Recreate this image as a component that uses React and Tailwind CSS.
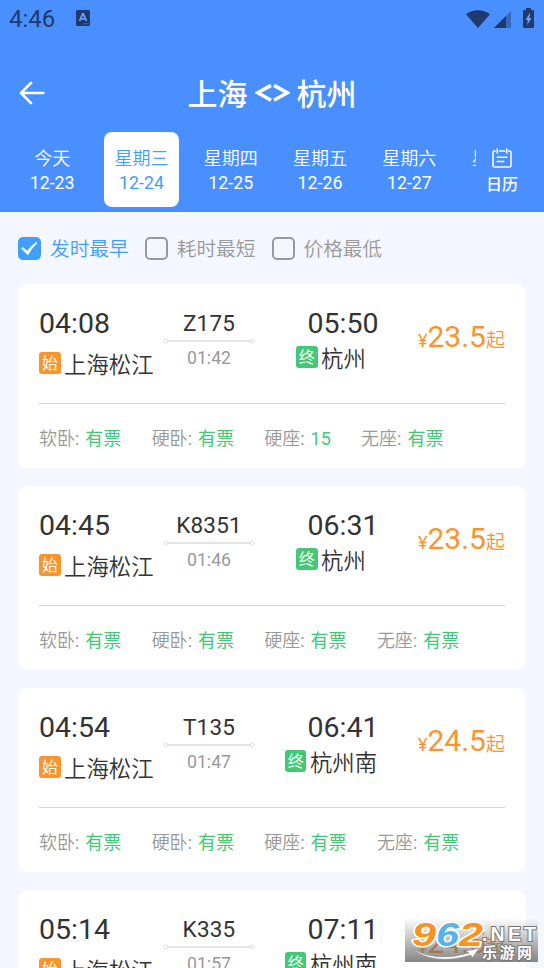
import React, { useState } from "react";

const days = [
  { name: "今天", date: "12-23" },
  { name: "星期三", date: "12-24" },
  { name: "星期四", date: "12-25" },
  { name: "星期五", date: "12-26" },
  { name: "星期六", date: "12-27" },
  { name: "星期日", date: "" },
];

const sorts = ["发时最早", "耗时最短", "价格最低"];

const trains = [
  { no: "Z175", start: "04:08", end: "05:50", cost: "01:42", from: "上海松江", to: "杭州", price: "23.5", seats: ["有票", "有票", "15", "有票"] },
  { no: "K8351", start: "04:45", end: "06:31", cost: "01:46", from: "上海松江", to: "杭州", price: "23.5", seats: ["有票", "有票", "有票", "有票"] },
  { no: "T135", start: "04:54", end: "06:41", cost: "01:47", from: "上海松江", to: "杭州南", price: "24.5", seats: ["有票", "有票", "有票", "有票"] },
  { no: "K335", start: "05:14", end: "07:11", cost: "01:57", from: "上海松江", to: "杭州南", price: "24.5", seats: [] },
];

const seatNames = ["软卧", "硬卧", "硬座", "无座"];

function StatusBar() {
  return (
    <div className="flex h-[38px] items-center pl-[9px] pr-[10px] text-[#1f3a6e]">
      <span className="w-[46px] text-[24px] font-[450] leading-[38px]">4:46</span>
      <svg className="ml-[21px] mt-[-2px]" width="14" height="16" viewBox="0 0 14 16">
        <rect width="14" height="16" rx="1.5" fill="currentColor" />
        <path d="M3.6 11 6.6 4h.8l3 7M4.8 8.8h4.4" fill="none" stroke="#6f9fee" strokeWidth="1.8" />
        <path d="M7.5 13.8h1m1 0h1m1 0h1" stroke="#6f9fee" strokeWidth="1" />
      </svg>
      <div className="ml-auto flex items-center">
        <svg width="24" height="18" viewBox="0 0 24 18">
          <path d="M0 4.2C6.5-1.2 17.5-1.2 24 4.2L12 18z" fill="currentColor" />
        </svg>
        <svg className="ml-1" width="17" height="17" viewBox="0 0 17 17">
          <path d="M17 0v17H0z" fill="currentColor" opacity=".45" />
          <path d="M12 5v12H0z" fill="currentColor" />
        </svg>
        <svg className="ml-[12px] mt-[-2px]" width="11" height="20" viewBox="0 0 11 20">
          <path d="M3 0h5v2h2q1 0 1 1v16q0 1-1 1H1q-1 0-1-1V3q0-1 1-1h2z" fill="currentColor" />
          <path d="M6.4 5.5 2.6 12h2.2l-.6 5L8.5 10H6.2l1-4.5z" fill="#6f9fee" />
        </svg>
      </div>
    </div>
  );
}

function Title() {
  return (
    <div className="grid h-[94px] grid-cols-[1fr_auto_1fr] items-center px-[19px] pt-[16px]">
      <svg width="26" height="24" viewBox="0 0 26 24" fill="none" stroke="#fff" strokeWidth="2.7" strokeLinecap="round" strokeLinejoin="round">
        <path d="M24.3 12H2M12 1.9 2 12l10 10.1" />
      </svg>
      <h1 className="flex items-center text-[30px] font-medium leading-none text-white">
        <span className="mt-[3px]">上海</span>
        <svg className="mx-[7px]" width="35" height="20" viewBox="0 0 35 20" fill="none" stroke="#fff" strokeWidth="3.6">
          <path d="M16 2.4 2.7 9.8 16 17.2M19 2.4l13.3 7.4L19 17.2" />
        </svg>
        <span className="mt-[3px]">杭州</span>
      </h1>
    </div>
  );
}

function Days() {
  const [active, setActive] = useState(1);
  return (
    <div className="flex h-[80px] text-white">
      <div className="flex w-[476px] gap-[15px] overflow-hidden pl-[15px]">
        {days.map((d, i) => (
          <button
            key={d.name}
            onClick={() => setActive(i)}
            className={`flex h-[75px] w-[74.3px] shrink-0 flex-col items-center rounded-lg pt-[14px] text-[18px] leading-[25px] ${
              active === i ? "bg-white text-[#409eff]" : ""
            }`}
          >
            <span className="font-[350]">{d.name}</span>
            <span className="mt-[-1px] text-[17.8px]">{d.date}</span>
          </button>
        ))}
      </div>
      <button className="flex w-[52px] flex-col items-center pt-[16px]">
        <svg width="20" height="20" viewBox="0 0 20 20" fill="none" stroke="#fff" strokeWidth="1.5" strokeLinecap="round">
          <path d="M3.2 3H2.6Q1 3 1 4.6v12.8Q1 19 2.6 19h14.8q1.6 0 1.6-1.6V4.6Q19 3 17.4 3h-.6M7.4 3h5.4M5.2 1v4M14.8 1v4M5.2 9.2h9.6M5.2 13.6h6.6" />
        </svg>
        <span className="mt-[2px] text-[16px] font-medium leading-[30px]">日历</span>
      </button>
    </div>
  );
}

function Sorts() {
  const [sort, setSort] = useState(0);
  return (
    <div className="flex h-[72px] shrink-0 items-center gap-4 pl-[18px]">
      {sorts.map((s, i) => (
        <button
          key={s}
          onClick={() => setSort(i)}
          className={`flex items-center text-[19.7px] font-[350] leading-[28px] ${sort === i ? "text-[#409eff]" : "text-[#999]"}`}
        >
          {sort === i ? (
            <span className="mr-[9px] flex size-[23px] items-center justify-center rounded-[5px] bg-[#409eff]">
              <svg width="17" height="15" viewBox="0 0 17 15" fill="#fff">
                <path d="M0 7.5 1.7 6l4.5 3.7Q10 4.7 15.6.8l.8 1.2Q11 7 7 14.3z" />
              </svg>
            </span>
          ) : (
            <span className="mr-[9px] size-[23px] rounded-[5px] border-2 border-[#999]" />
          )}
          <span className="pt-[3px]">{s}</span>
        </button>
      ))}
    </div>
  );
}

function Station({ tag, name, color }) {
  return (
    <div className="flex h-[30px] items-center whitespace-nowrap text-[22.4px] leading-[30px]">
      <span className={`mr-[3.5px] flex size-[21.5px] items-center justify-center rounded-[3px] pt-[1px] text-[16px] leading-none text-white ${color}`}>
        {tag}
      </span>
      <span className="pt-[3px] font-[350]">{name}</span>
    </div>
  );
}

function TrainCard({ train }) {
  return (
    <div className="h-[184px] shrink-0 rounded-[10px] bg-white px-[21px] text-[#333]">
      <div className="flex h-[120px] border-b border-[#d6d6d6]">
        <div className="w-[124px] pt-[22px]">
          <div className="text-[28.5px] leading-[36px]">{train.start}</div>
          <div className="mt-[6px]">
            <Station tag="始" name={train.from} color="bg-[#f9952c]" />
          </div>
        </div>
        <div className="flex w-[92px] flex-col items-center pt-[24px]">
          <div className="text-[22.5px] leading-[30px] tracking-[0.2px]">{train.no}</div>
          <svg width="92" height="6" viewBox="0 0 92 6" fill="#fff" stroke="#ddd">
            <path d="M4.5 3h83" strokeWidth="1.3" />
            <circle cx="2.7" cy="3" r="2" />
            <circle cx="89.3" cy="3" r="2" />
          </svg>
          <div className="text-[17.7px] leading-[28px] text-[#999]">{train.cost}</div>
        </div>
        <div className="flex w-[152px] flex-col items-center pt-[22px]">
          <div className="pl-[24px] text-[28.5px] leading-[36px]">{train.end}</div>
          <Station tag="终" name={train.to} color="bg-[#43c877]" />
        </div>
        <div className="ml-auto flex items-baseline pt-[35px] leading-[36px] text-[#f9952c]">
          <span className="text-[18px]">¥</span>
          <span className="text-[30px]">{train.price}</span>
          <span className="text-[19px] font-[350]">起</span>
        </div>
      </div>
      <div className="flex h-[64px] items-center gap-[30.3px] pt-[4px] text-[18px] text-[#999]">
        {train.seats.map((s, i) => (
          <span key={i} className="whitespace-nowrap">
            <span className="font-[350]">{seatNames[i]}</span>: <span className="ml-[1.5px] text-[#43c877]">{s}</span>
          </span>
        ))}
      </div>
    </div>
  );
}

function Watermark() {
  return (
    <div className="absolute left-[405px] top-[918px] h-[44px] w-[133px] bg-linear-to-b from-gray-500/0 to-[#666]/80">
      <svg width="133" height="44" viewBox="0 0 133 44" fontFamily="Liberation Sans, Noto Sans CJK SC, sans-serif" fontWeight="bold">
        <g fontSize="34" fontStyle="italic" stroke="#fff" strokeWidth="3" paintOrder="stroke" strokeLinejoin="round">
          <text x="7" y="28" fill="#f7931e" textLength="24" lengthAdjust="spacingAndGlyphs">9</text>
          <text x="31" y="28" fill="#56b4e9" textLength="23" lengthAdjust="spacingAndGlyphs">6</text>
          <text x="54" y="28" fill="#f7931e" textLength="24" lengthAdjust="spacingAndGlyphs">2</text>
        </g>
        <path d="M6 30.5Q32 45 64 35l-3-2 13-2.500-7 9.500-1-3Q30 48 6 30.500z" fill="#fff" stroke="#888" strokeWidth=".5" />
        <g fill="#fff" stroke="#777" strokeWidth="2" paintOrder="stroke">
          <text x="77" y="22.500" fontSize="19.500" textLength="54" lengthAdjust="spacing">.NET</text>
          <text x="77" y="39.500" fontSize="15" textLength="50">乐游网</text>
        </g>
      </svg>
    </div>
  );
}

export default function App() {
  return (
    <div className="relative flex h-[968px] w-[544px] flex-col overflow-hidden bg-[#f4f7ff] font-['Roboto','Noto_Sans_CJK_SC',sans-serif]">
      <header className="h-[212px] shrink-0 bg-[#4a8fff]">
        <StatusBar />
        <Title />
        <Days />
      </header>
      <Sorts />
      <div className="flex flex-col gap-[18px] px-[18px]">
        {trains.map((t) => (
          <TrainCard key={t.no} train={t} />
        ))}
      </div>
      <Watermark />
    </div>
  );
}
